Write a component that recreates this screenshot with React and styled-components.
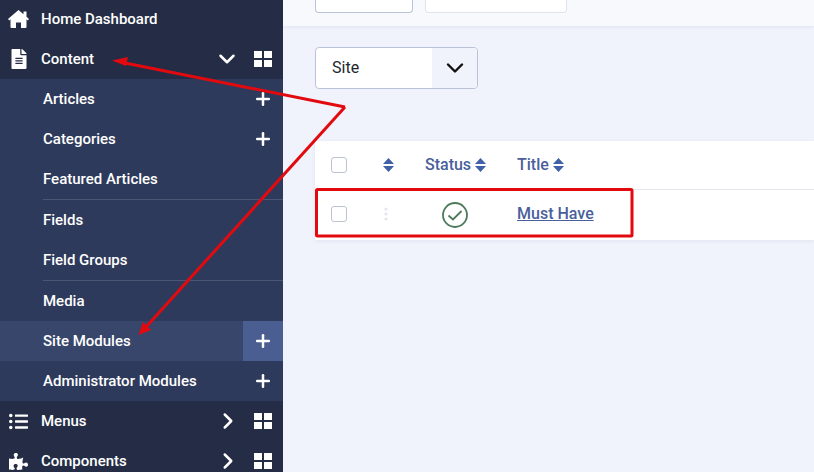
import React from "react";
import styled, { createGlobalStyle } from "styled-components";
import { ChevronDown, ChevronRight, Plus } from "lucide-react";
import { FaFileAlt, FaListUl, FaPuzzlePiece } from "react-icons/fa";

const Global = createGlobalStyle`
  html, body { margin: 0; padding: 0; width: 814px; height: 472px; overflow: hidden; }
  body { font-family: Roboto, "Liberation Sans", sans-serif; background: #f0f3fb; }
  * { box-sizing: border-box; }
`;

const Page = styled.div`
  position: relative;
  display: grid;
  grid-template-columns: 283px 1fr;
  width: 814px;
  height: 472px;
  overflow: hidden;
`;

const Sidebar = styled.nav`
  background: #242d45;
  display: flex;
  flex-direction: column;
  margin-top: -1px;
`;

const TopRow = styled.div`
  height: 40px;
  flex: none;
  display: flex;
  align-items: center;
  color: #fff;
  font-size: 15px;
  font-weight: 500;
  padding-right: 11px;
`;

const IconSlot = styled.span`
  width: 41px;
  flex: none;
  display: flex;
  justify-content: center;
  padding-right: 4px;
`;

const Label = styled.span`
  flex: 1;
`;

const Chevron = styled.span`
  width: 26px;
  display: flex;
  justify-content: center;
  margin-right: ${p => p.$mr}px;
`;

const SubList = styled.div`
  background: #2e3a5b;
  display: flex;
  flex-direction: column;
`;

const SubRow = styled.div`
  height: ${p => p.$h || 40}px;
  display: flex;
  align-items: center;
  justify-content: space-between;
  margin-left: ${p => (p.$rule ? 43 : 0)}px;
  padding-left: ${p => (p.$rule ? 0 : 43)}px;
  color: #fff;
  font-size: 15px;
  font-weight: 500;
  background: ${p => (p.$active ? "#38466c" : "transparent")};
  border-top: ${p => (p.$rule ? "1px solid #4a5672" : "none")};
`;

const AddSlot = styled.span`
  width: 40px;
  height: 100%;
  display: flex;
  align-items: center;
  justify-content: center;
  background: ${p => (p.$active ? "#4a5e92" : "transparent")};
`;

const Main = styled.main`
  display: flex;
  flex-direction: column;
`;

const Toolbar = styled.div`
  height: 26px;
  flex: none;
  background: #f8f9fd;
  box-shadow: 0 1px 3px rgba(30, 50, 110, 0.08);
  display: flex;
  gap: 12px;
  padding-left: 32px;
  align-items: flex-start;
`;

const ToolButton = styled.div`
  width: ${p => p.$w}px;
  height: 13px;
  background: #fff;
  border: 1px solid ${p => p.$c};
  border-top: none;
  border-radius: 0 0 4px 4px;
`;

const Select = styled.div`
  margin: 21px 0 0 32px;
  width: 163px;
  height: 42px;
  display: flex;
  border: 1px solid #b9c2d6;
  border-radius: 4px;
  overflow: hidden;
  background: #fff;
  flex: none;
`;

const SelectText = styled.div`
  flex: 1;
  padding: 0 0 2px 16px;
  display: flex;
  align-items: center;
  font-size: 16px;
  color: #22262e;
`;

const SelectArrow = styled.div`
  width: 45px;
  background: #f0f3fb;
  display: flex;
  align-items: center;
  justify-content: center;
`;

const Table = styled.div`
  margin: 52px 0 0 32px;
  background: #fff;
  display: flex;
  flex-direction: column;
  box-shadow: 0 1px 4px rgba(30, 50, 110, 0.08);
`;

const Row = styled.div`
  height: ${p => p.$h}px;
  display: grid;
  grid-template-columns: 48px 62px 92px 1fr;
  align-items: center;
  border-top: ${p => (p.$rule ? "1px solid #e4e6ec" : "none")};
`;

const Check = styled.span`
  width: 16px;
  height: 16px;
  margin: 0 0 ${p => p.$mb || 0}px 16px;
  border: 1px solid #bcc3d3;
  border-radius: 3px;
  background: #fff;
  display: block;
`;

const Heading = styled.span`
  color: #4a5f9c;
  font-size: 16px;
  font-weight: 500;
  display: flex;
  align-items: center;
  gap: 4px;
  margin-bottom: 1px;
`;

const Handle = styled.span`
  display: flex;
  padding-left: ${p => p.$pl}px;
  margin-bottom: ${p => p.$mb || 0}px;
`;

const StatusCell = styled.span`
  display: flex;
  padding-left: 17px;
`;

const TitleLink = styled.a`
  color: #4a5f9c;
  font-size: 16px;
  font-weight: 500;
  text-decoration: underline;
  margin-bottom: 3px;
`;

const Overlay = styled.svg`
  position: absolute;
  inset: 0;
  pointer-events: none;
`;

const HomeIcon = () => (
  <svg width="21" height="18" viewBox="0 0 21 18" fill="#fff">
    <path d="M10.500 0 15.500 4.200V1.500H18.500V6.800L21 9 19.800 10.400 18.500 9.300V17a1 1 0 0 1-1 1H13V12.500H8V18H3.500a1 1 0 0 1-1-1V9.300L1.200 10.400 0 9z" />
  </svg>
);

const Tile = () => (
  <svg width="18" height="16" viewBox="0 0 18 16" fill="#fff">
    <rect x="0" y="0" width="8" height="7" />
    <rect x="10" y="0" width="8" height="7" />
    <rect x="0" y="9" width="8" height="7" />
    <rect x="10" y="9" width="8" height="7" />
  </svg>
);

const Sort = () => (
  <svg width="11" height="14" viewBox="0 0 11 14" fill="#4060a8">
    <path d="M5.500 0 11 6H0zM0 8h11l-5.500 6z" />
  </svg>
);

const Drag = () => (
  <svg width="4" height="14" viewBox="0 0 4 14" fill="#e3e6ee">
    <circle cx="2" cy="2" r="1.600" /><circle cx="2" cy="7" r="1.600" /><circle cx="2" cy="12" r="1.600" />
  </svg>
);

const StatusIcon = () => (
  <svg width="26" height="26" viewBox="0 0 26 26" fill="none" stroke="#4c7a5b" strokeWidth="1.800">
    <circle cx="13" cy="13" r="12" />
    <path d="M6.500 13.500 11 17.500 19.500 9" />
  </svg>
);

const subItems = [
  { t: "Articles", add: true },
  { t: "Categories", add: true },
  { t: "Featured Articles" },
  { t: "Fields", rule: true, h: 41 },
  { t: "Field Groups" },
  { t: "Media", rule: true, h: 41 },
  { t: "Site Modules", add: true, active: true },
  { t: "Administrator Modules", add: true },
];

export default function App() {
  return (
    <Page>
      <Global />
      <Sidebar>
        <TopRow>
          <IconSlot><HomeIcon /></IconSlot>
          <Label>Home Dashboard</Label>
        </TopRow>
        <TopRow>
          <IconSlot><FaFileAlt size={20} color="#fff" /></IconSlot>
          <Label>Content</Label>
          <Chevron $mr={14}><ChevronDown size={26} color="#fff" strokeWidth={2.3} /></Chevron>
          <Tile />
        </TopRow>
        <SubList>
          {subItems.map(s => (
            <SubRow key={s.t} $active={s.active} $rule={s.rule} $h={s.h}>
              {s.t}
              {s.add && (
                <AddSlot $active={s.active}><Plus size={20} color="#fff" strokeWidth={3} /></AddSlot>
              )}
            </SubRow>
          ))}
        </SubList>
        <TopRow>
          <IconSlot><FaListUl size={19} color="#fff" /></IconSlot>
          <Label>Menus</Label>
          <Chevron $mr={13}><ChevronRight size={26} color="#fff" strokeWidth={2.3} /></Chevron>
          <Tile />
        </TopRow>
        <TopRow>
          <IconSlot><FaPuzzlePiece size={19} color="#fff" /></IconSlot>
          <Label>Components</Label>
          <Chevron $mr={13}><ChevronRight size={26} color="#fff" strokeWidth={2.3} /></Chevron>
          <Tile />
        </TopRow>
      </Sidebar>
      <Main>
        <Toolbar>
          <ToolButton $w={98} $c="#b9c2d6" />
          <ToolButton $w={142} $c="#dfe3ec" />
        </Toolbar>
        <Select>
          <SelectText>Site</SelectText>
          <SelectArrow><ChevronDown size={28} color="#111" strokeWidth={2.1} /></SelectArrow>
        </Select>
        <Table>
          <Row $h={48}>
            <Check />
            <Handle $pl={20}><Sort /></Handle>
            <Heading>Status <Sort /></Heading>
            <Heading>Title <Sort /></Heading>
          </Row>
          <Row $h={51} $rule>
            <Check $mb={2} />
            <Handle $pl={21} $mb={2}><Drag /></Handle>
            <StatusCell><StatusIcon /></StatusCell>
            <TitleLink>Must Have</TitleLink>
          </Row>
        </Table>
      </Main>
      <Overlay width="814" height="472" viewBox="0 0 814 472">
        <rect x="316.500" y="189.500" width="315.500" height="46.500" rx="1" fill="none" stroke="#e20a0f" strokeWidth="3" />
        <path d="M345 107 125 63" stroke="#e20a0f" strokeWidth="3" fill="none" />
        <path d="M112 60.500 128 57 126 66z" fill="#e20a0f" />
        <path d="M345 107 146 327" stroke="#e20a0f" strokeWidth="3" fill="none" />
        <path d="M138.500 335 143 322 151 330z" fill="#e20a0f" />
      </Overlay>
    </Page>
  );
}
